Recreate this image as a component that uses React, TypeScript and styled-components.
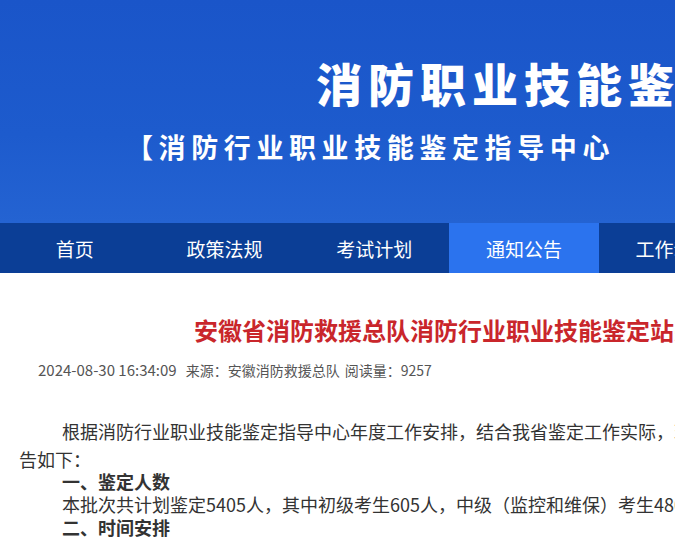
import React from 'react';
import styled, { createGlobalStyle } from 'styled-components';

const GlobalStyle = createGlobalStyle`
  body {
    margin: 0;
    overflow: hidden;
    background: #fff;
    font-family: "Noto Sans CJK SC", "Noto Sans", sans-serif;
  }
`;

// Styles
const Page = styled.div`
  width: 1200px;
`;

const Banner = styled.header`
  height: 223px;
  box-sizing: border-box;
  padding-top: 59px;
  background: linear-gradient(180deg, #1a55c9 0%, #1d5bcd 60%, #2463d2 100%);
  color: #fff;
`;

const SiteTitle = styled.h1`
  margin: 0;
  padding-left: 316px;
  font-size: 46px;
  line-height: 46px;
  font-weight: 900;
  letter-spacing: 6px;
  white-space: nowrap;
`;

const SiteSubtitle = styled.div`
  margin-top: 28px;
  padding-left: 126px;
  font-size: 27px;
  line-height: 27px;
  font-weight: 700;
  letter-spacing: 5.6px;
  white-space: nowrap;
`;

const Nav = styled.nav`
  display: flex;
  height: 50px;
  background: #0b3e96;
`;

const NavItem = styled.a<{ $active?: boolean }>`
  width: 149.7px;
  flex-shrink: 0;
  display: flex;
  align-items: center;
  justify-content: center;
  font-size: 19px;
  color: #fff;
  text-decoration: none;
  background: ${(p) => (p.$active ? '#2b73ee' : 'transparent')};
  white-space: nowrap;
`;

const Article = styled.article`
  padding: 42px 19px 0;
  color: #333;
`;

const ArticleTitle = styled.h2`
  margin: 0;
  padding-left: 175px;
  font-size: 24px;
  line-height: 30px;
  font-weight: 700;
  color: #c9262b;
  white-space: nowrap;
`;

const Meta = styled.div`
  margin-top: 15px;
  padding-left: 19px;
  font-size: 14px;
  line-height: 20px;
  color: #555;
  white-space: nowrap;
`;

const MetaDate = styled.span`
  font-size: 15px;
  margin-right: 9px;
`;

const MetaPart = styled.span`
  margin-right: 5px;
`;

const Body = styled.div`
  margin-top: 37px;
  font-size: 18px;
  line-height: 23px;
  color: #333;
`;

const Para = styled.p`
  margin: 0 0 -3px;
  line-height: 28px;
  text-indent: 43px;
  width: 790px;
`;

const Line = styled.div<{ $bold?: boolean }>`
  padding-left: 43px;
  white-space: nowrap;
  font-weight: ${(p) => (p.$bold ? 700 : 400)};
`;

const menu = ['首页', '政策法规', '考试计划', '通知公告', '工作动态', '下载中心'];

const App: React.FC = () => {
  return (
    <Page>
      <GlobalStyle />
      <Banner>
        <SiteTitle>消防职业技能鉴定服务平台</SiteTitle>
        <SiteSubtitle>【消防行业职业技能鉴定指导中心</SiteSubtitle>
      </Banner>

      <Nav>
        {menu.map((item) => (
          <NavItem key={item} href="#" $active={item === '通知公告'}>
            {item}
          </NavItem>
        ))}
      </Nav>

      <Article>
        <ArticleTitle>安徽省消防救援总队消防行业职业技能鉴定站关于鉴定工作安排的公告</ArticleTitle>
        <Meta>
          <MetaDate>2024-08-30 16:34:09</MetaDate>
          <MetaPart>来源：安徽消防救援总队</MetaPart>
          <span>阅读量：9257</span>
        </Meta>

        <Body>
          <Para>
            根据消防行业职业技能鉴定指导中心年度工作安排，结合我省鉴定工作实际，现将有关事项公告如下：
          </Para>
          <Line $bold>一、鉴定人数</Line>
          <Line>本批次共计划鉴定5405人，其中初级考生605人，中级（监控和维保）考生4800人。</Line>
          <Line $bold>二、时间安排</Line>
        </Body>
      </Article>
    </Page>
  );
};

export default App;
